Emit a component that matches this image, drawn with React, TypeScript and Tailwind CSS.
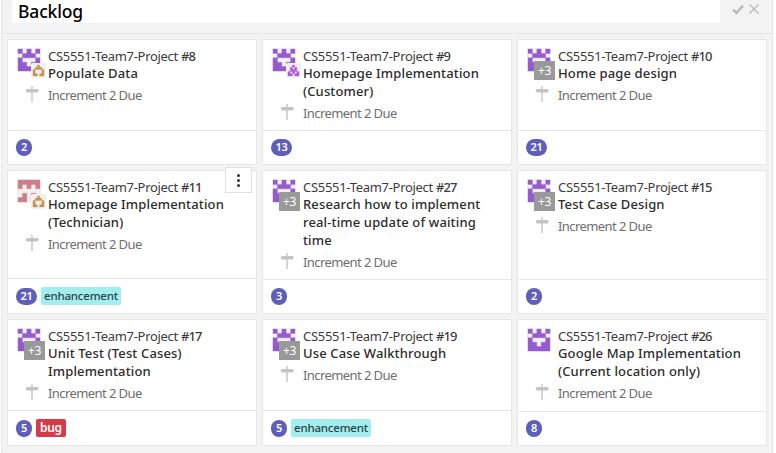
import React from "react";

type SpriteName = "purple" | "rose" | "tan" | "violet";
type CardData = {
  id: number;
  title: string[];
  avatar: "purple" | "rose";
  extra?: "tan" | "violet" | "more";
  estimate: number;
  label?: "enhancement" | "bug";
  menu?: boolean;
};

const sprites: Record<SpriteName, { color: string; rows: string[] }> = {
  purple: { color: "#965ccf", rows: ["#.#.#", ".###.", "#...#", "##.##", "#####"] },
  rose: { color: "#d07d8a", rows: ["#####", "#.#.#", ".....", ".#.#.", "##.##"] },
  tan: { color: "#c8944c", rows: ["..#..", ".###.", "#...#", "#...#", "##.##"] },
  violet: { color: "#b05cd6", rows: ["..#..", ".#.#.", ".###.", "#.#.#", "##.##"] },
};

const cards: CardData[] = [
  { id: 8, title: ["Populate Data"], avatar: "purple", extra: "tan", estimate: 2 },
  { id: 9, title: ["Homepage Implementation", "(Customer)"], avatar: "purple", extra: "violet", estimate: 13 },
  { id: 10, title: ["Home page design"], avatar: "purple", extra: "more", estimate: 21 },
  { id: 11, title: ["Homepage Implementation", "(Technician)"], avatar: "rose", extra: "tan", estimate: 21, label: "enhancement", menu: true },
  { id: 27, title: ["Research how to implement", "real-time update of waiting", "time"], avatar: "purple", extra: "more", estimate: 3 },
  { id: 15, title: ["Test Case Design"], avatar: "purple", extra: "more", estimate: 2 },
  { id: 17, title: ["Unit Test (Test Cases)", "Implementation"], avatar: "purple", extra: "more", estimate: 5, label: "bug" },
  { id: 19, title: ["Use Case Walkthrough"], avatar: "purple", extra: "more", estimate: 5, label: "enhancement" },
  { id: 26, title: ["Google Map Implementation", "(Current location only)"], avatar: "purple", estimate: 8 },
];

function Identicon({ name, size, pad }: { name: SpriteName; size: number; pad: number }) {
  const { color, rows } = sprites[name];
  const cell = (size - pad * 2) / 5;
  const d = rows
    .flatMap((row, y) => [...row].map((ch, x) => (ch === "#" ? `M${pad + x * cell} ${pad + y * cell}h${cell}v${cell}h${-cell}z` : "")))
    .join("");
  return (
    <svg width={size} height={size} viewBox={`0 0 ${size} ${size}`} className="block">
      <rect width={size} height={size} rx="1.5" fill="#f0f0f0" />
      <path fill={color} stroke={color} strokeWidth="0.3" d={d} />
    </svg>
  );
}

function Milestone() {
  return (
    <svg width="15" height="16" viewBox="0 0 15 16" className="block">
      <path fill="#c4c4c4" d="M6.3 0h1.4v3h4.8L14 4.7l-1.5 1.7H7.7V16H6.3V6.4H2L.8 5.4V4L2 3h4.3z" />
    </svg>
  );
}

function Card({ c }: { c: CardData }) {
  return (
    <article className="relative flex flex-col rounded-[1px] border border-[#e6e6e6] bg-white">
      <div className="flex flex-1 pl-[9px] pt-[8px]">
        <div className="relative h-6 w-6 shrink-0">
          <Identicon name={c.avatar} size={24} pad={1} />
          {c.extra === "more" && (
            <span className="absolute left-[7px] top-[13px] flex h-[19px] w-[21px] items-center justify-center bg-[#999] text-[12px] tracking-[-0.3px] text-white">+3</span>
          )}
          {(c.extra === "tan" || c.extra === "violet") && (
            <span className="absolute left-[14px] top-[15px]"><Identicon name={c.extra} size={15} pad={2} /></span>
          )}
        </div>
        <div className="ml-[7px] whitespace-nowrap">
          <div className="h-4 text-[13px] leading-[17px] tracking-[-0.3px] text-[#3c3c3c]">
            CS5551-Team7-Project <span className="font-medium tracking-[-0.9px]">#{c.id}</span>
          </div>
          <div className="text-[13px] font-medium leading-[18px] tracking-[0.14px] text-[#2c2c2c]">
            {c.title.map((t) => (
              <div key={t}>{t}</div>
            ))}
          </div>
          <div className="relative mt-1 text-[13px] leading-[18px] tracking-[-0.58px] text-[#6e6e6e]">
            <span className="absolute -left-[23px] top-0"><Milestone /></span>
            Increment 2 Due
          </div>
        </div>
      </div>
      <footer className={`flex items-center border-t border-[#e6e6e6] pl-2 ${c.label ? "h-[35px]" : "h-[34px]"}`}>
        <span className="flex h-[17px] min-w-4 items-center justify-center rounded-full bg-[#5f5fbb] px-[4.5px] text-[11px] font-semibold tracking-[-0.3px] text-white">{c.estimate}</span>
        {c.label === "enhancement" && <span className="ml-1 flex h-[18px] items-center rounded-[2px] bg-[#a2eeef] px-[3px] text-[11.5px] font-medium tracking-[-0.2px] text-[#2b4546]">enhancement</span>}
        {c.label === "bug" && <span className="ml-1 flex h-[18px] items-center rounded-[2px] bg-[#d73a4a] px-1 text-[12px] font-semibold tracking-[-0.3px] text-white">bug</span>}
      </footer>
      {c.menu && (
        <button className="absolute -top-[4px] right-[4px] flex h-[26px] w-[27px] flex-col items-center justify-center gap-[2px] border border-[#e1e1e1] bg-white">
          <i className="h-[3px] w-[3px] rounded-full bg-[#333]" />
          <i className="h-[3px] w-[3px] rounded-full bg-[#333]" />
          <i className="h-[3px] w-[3px] rounded-full bg-[#333]" />
        </button>
      )}
    </article>
  );
}

export default function App() {
  return (
    <main className="h-[453px] w-[776px] overflow-hidden bg-white pl-px font-['Noto_Sans','Open_Sans',sans-serif]">
      <section className="h-full w-[772px] border-x border-[#e5e5e5] bg-[#f3f3f3]">
        <header className="flex h-[34px] border-b border-[#e5e5e5] pl-[10px]">
          <div className="h-[23px] w-[708px] bg-white pl-[6px] text-[17.5px] font-medium leading-[22px] tracking-[-0.15px] text-black">Backlog</div>
          <svg width="40" height="20" viewBox="0 0 40 20" className="ml-2" fill="none" stroke="#b4b8bd">
            <path strokeWidth="2.4" d="M5 9.5l3.5 3.5 6.5-7.5" />
            <path strokeWidth="1.3" d="M21.5 4.5l9 9m0-9l-9 9" />
          </svg>
        </header>
        <div className="grid grid-cols-[250px_250px_250px] grid-rows-[126px_144px_127px] gap-[5px] pl-[5px] pt-[5px]">
          {cards.map((c) => <Card key={c.id} c={c} />)}
        </div>
      </section>
    </main>
  );
}
